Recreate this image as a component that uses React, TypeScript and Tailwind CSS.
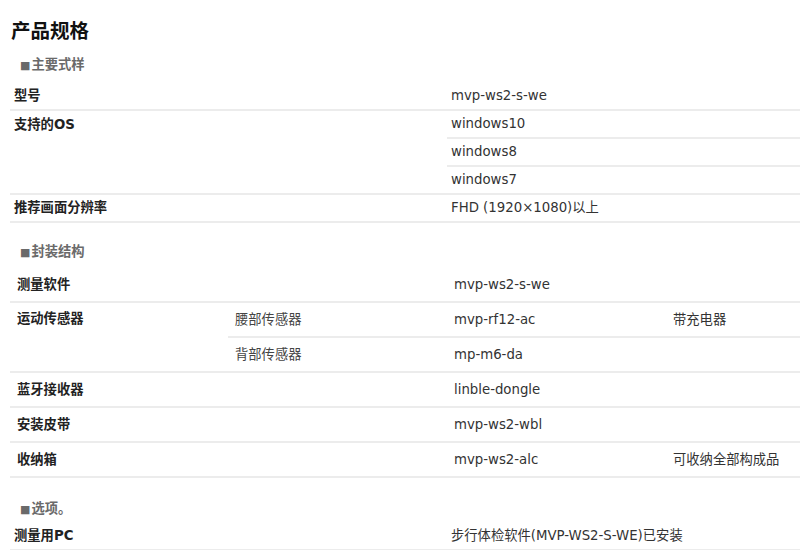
import React from "react";

const font = { fontFamily: '"DejaVu Sans", "Noto Sans CJK SC", sans-serif' };

function SectionHeader({ text, cls }: { text: string; cls: string }) {
  return (
    <div className={`${cls} leading-[18px]`}>
      <div className="pl-[10px] text-[13.3px] leading-[18px] font-bold text-[#6a6a6a]">
        <span className="text-[11px] mr-[1px]">■</span>
        {text}
      </div>
    </div>
  );
}

export default function App() {
  const td1 = "h-[28px] border-b-2 border-[#ececec] px-[4px] align-middle";
  const td2 = "h-[35px] border-b-2 border-[#ececec] px-[7px] align-middle";
  return (
    <div className="w-[800px] h-[550px] overflow-hidden bg-white pl-[10px]" style={font}>
      <div className="pt-[20px] h-[48px]">
        <h1 className="text-[19.5px] leading-[24px] font-bold text-[#111] pl-[1px]">产品规格</h1>
      </div>
      <SectionHeader text="主要式样" cls="h-[35px] pt-[8px]" />
      <table className="w-[874px] table-fixed border-separate border-spacing-0 text-[13.3px] leading-[18px]">
        <colgroup>
          <col className="w-[437px]" />
          <col className="w-[437px]" />
        </colgroup>
        <tbody>
          <tr>
            <td className={`${td1} font-bold text-[#222]`}>型号</td>
            <td className={`${td1} text-[#333]`}>mvp-ws2-s-we</td>
          </tr>
          <tr>
            <td rowSpan={3} className="border-b-2 border-[#ececec] px-[4px] pt-[5px] align-top font-bold text-[#222]">
              支持的OS
            </td>
            <td className={`${td1} text-[#333]`}>windows10</td>
          </tr>
          <tr>
            <td className={`${td1} text-[#333]`}>windows8</td>
          </tr>
          <tr>
            <td className={`${td1} text-[#333]`}>windows7</td>
          </tr>
          <tr>
            <td className={`${td1} font-bold text-[#222]`}>推荐画面分辨率</td>
            <td className={`${td1} text-[#333]`}>FHD (1920×1080)以上</td>
          </tr>
        </tbody>
      </table>
      <SectionHeader text="封装结构" cls="h-[45px] pt-[20px]" />
      <table className="w-[874px] table-fixed border-separate border-spacing-0 text-[13.3px] leading-[18px]">
        <colgroup>
          <col className="w-[218px]" />
          <col className="w-[219px]" />
          <col className="w-[219px]" />
          <col className="w-[218px]" />
        </colgroup>
        <tbody>
          <tr>
            <td className={`${td2} font-bold text-[#222]`}>测量软件</td>
            <td className={td2}></td>
            <td className={`${td2} text-[#333]`}>mvp-ws2-s-we</td>
            <td className={td2}></td>
          </tr>
          <tr>
            <td rowSpan={2} className="border-b-2 border-[#ececec] px-[7px] pt-[7px] align-top font-bold text-[#222]">
              运动传感器
            </td>
            <td className={`${td2} text-[#444]`}>腰部传感器</td>
            <td className={`${td2} text-[#333]`}>mvp-rf12-ac</td>
            <td className={`${td2} text-[#333]`}>带充电器</td>
          </tr>
          <tr>
            <td className={`${td2} text-[#444]`}>背部传感器</td>
            <td className={`${td2} text-[#333]`}>mp-m6-da</td>
            <td className={td2}></td>
          </tr>
          <tr>
            <td className={`${td2} font-bold text-[#222]`}>蓝牙接收器</td>
            <td className={td2}></td>
            <td className={`${td2} text-[#333]`}>linble-dongle</td>
            <td className={td2}></td>
          </tr>
          <tr>
            <td className={`${td2} font-bold text-[#222]`}>安装皮带</td>
            <td className={td2}></td>
            <td className={`${td2} text-[#333]`}>mvp-ws2-wbl</td>
            <td className={td2}></td>
          </tr>
          <tr>
            <td className={`${td2} font-bold text-[#222]`}>收纳箱</td>
            <td className={td2}></td>
            <td className={`${td2} text-[#333]`}>mvp-ws2-alc</td>
            <td className={`${td2} text-[#333]`}>可收纳全部构成品</td>
          </tr>
        </tbody>
      </table>
      <SectionHeader text="选项。" cls="h-[45px] pt-[22px]" />
      <table className="w-[874px] table-fixed border-separate border-spacing-0 text-[13.3px] leading-[18px]">
        <colgroup>
          <col className="w-[437px]" />
          <col className="w-[437px]" />
        </colgroup>
        <tbody>
          <tr>
            <td className={`${td1} font-bold text-[#222]`}>测量用PC</td>
            <td className={`${td1} text-[#333]`}>步行体检软件(MVP-WS2-S-WE)已安装</td>
          </tr>
        </tbody>
      </table>
    </div>
  );
}
